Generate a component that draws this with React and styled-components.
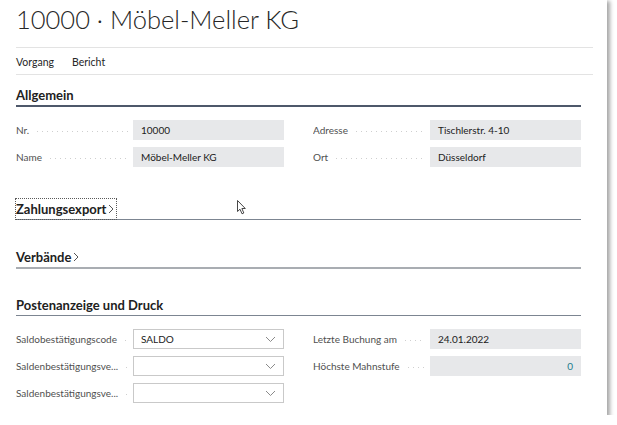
import React from "react";
import styled, { createGlobalStyle } from "styled-components";

const Global = createGlobalStyle`
  html, body { margin: 0; padding: 0; background: #ffffff; }
  body { font-family: "Lato", "Open Sans", sans-serif; color: #212121; }
  * { box-sizing: border-box; }
`;

const Page = styled.div`
  position: relative;
  width: 607px;
  height: 415px;
  background: #ffffff;
  box-shadow: 2px 2px 4px 1px rgba(0, 0, 0, 0.35);
  padding-left: 16px;
  overflow: hidden;
`;

const TitleBar = styled.div`
  width: 577px;
  height: 48px;
  border-bottom: 1px solid #e3e3e3;
  display: flex;
  align-items: center;
`;

const Title = styled.h1`
  margin: 0;
  font-weight: 300;
  font-size: 25.5px;
  line-height: 1;
  color: #262626;
  margin-top: -7px;
`;

const ActionBar = styled.div`
  width: 577px;
  height: 27px;
  border-bottom: 1px solid #e3e3e3;
  display: flex;
  align-items: center;
  gap: 18px;
  padding-top: 1px;
`;

const Action = styled.span`
  font-size: 10.5px;
  color: #262626;
`;

const Content = styled.div`
  width: 565px;
`;

const SectionHead = styled.div`
  margin-top: ${(p) => p.$top}px;
  height: ${(p) => 20 + p.$line}px;
  border-bottom: ${(p) => p.$line}px solid ${(p) => p.$color};
  display: flex;
  align-items: flex-start;
`;

const HeadText = styled.span`
  display: inline-flex;
  align-items: center;
  gap: 2px;
  height: 20px;
  font-size: 13px;
  font-weight: 700;
  color: #212121;
  outline: ${(p) => (p.$focus ? "1px dotted #5a5a5a" : "none")};
  outline-offset: 0;
  padding-right: ${(p) => (p.$focus ? "2px" : "0")};
`;

const Grid = styled.div`
  margin-top: ${(p) => p.$top}px;
  display: grid;
  grid-template-columns: 268px 268px;
  column-gap: 29px;
  align-items: start;
`;

const Column = styled.div`
  display: flex;
  flex-direction: column;
  gap: 7px;
`;

const Field = styled.div`
  display: flex;
  align-items: center;
  height: 20px;
`;

const Label = styled.div`
  width: 117px;
  flex: none;
  display: flex;
  align-items: center;
  font-size: 10px;
  color: #505050;
  white-space: nowrap;
  overflow: hidden;
`;

const Leader = styled.span`
  flex: 1;
  height: 1px;
  margin: 3px 5px 0 6px;
  background-image: radial-gradient(circle, #cfcfcf 0.6px, transparent 0.8px);
  background-size: 5px 1px;
  background-repeat: repeat-x;
`;

const Value = styled.div`
  flex: 1;
  height: 20px;
  background: ${(p) => (p.$select ? "#ffffff" : "#e7e8ea")};
  border: ${(p) => (p.$select ? "1px solid #c9c9c9" : "none")};
  display: flex;
  align-items: center;
  justify-content: ${(p) => (p.$right ? "flex-end" : "space-between")};
  padding: 0 ${(p) => (p.$select ? "7px" : "8px")};
  font-size: 10px;
  color: ${(p) => (p.$number ? "#1f7d8c" : "#212121")};
`;

const Cursor = styled.svg`
  position: absolute;
  left: 237px;
  top: 200px;
`;

const Chevron = () => (
  <svg width="6" height="10" viewBox="0 0 6 10">
    <path d="M1 1 L5 5 L1 9" fill="none" stroke="#555" strokeWidth="1" />
  </svg>
);

const Down = () => (
  <svg width="11" height="7" viewBox="0 0 11 7">
    <path d="M1 1 L5.5 5.5 L10 1" fill="none" stroke="#8a8a8a" strokeWidth="1" />
  </svg>
);

const Row = ({ label, value, select, right, number }) => (
  <Field>
    <Label>
      {label}
      <Leader />
    </Label>
    <Value $select={select} $right={right} $number={number}>
      <span>{value}</span>
      {select && <Down />}
    </Value>
  </Field>
);

export default function App() {
  return (
    <>
      <Global />
      <Page>
        <TitleBar>
          <Title>10000 · Möbel-Meller KG</Title>
        </TitleBar>
        <ActionBar>
          <Action>Vorgang</Action>
          <Action>Bericht</Action>
        </ActionBar>
        <Content>
          <SectionHead $top={10} $line={2} $color="#4e586a">
            <HeadText>Allgemein</HeadText>
          </SectionHead>
          <Grid $top={13}>
            <Column>
              <Row label="Nr." value="10000" />
              <Row label="Name" value="Möbel-Meller KG" />
            </Column>
            <Column>
              <Row label="Adresse" value="Tischlerstr. 4-10" />
              <Row label="Ort" value="Düsseldorf" />
            </Column>
          </Grid>

          <SectionHead $top={32} $line={1} $color="#7c8591">
            <HeadText $focus>
              Zahlungsexport
              <Chevron />
            </HeadText>
          </SectionHead>

          <SectionHead $top={27} $line={2} $color="#a9adb2">
            <HeadText>
              Verbände
              <Chevron />
            </HeadText>
          </SectionHead>

          <SectionHead $top={26} $line={1} $color="#7c8591">
            <HeadText>Postenanzeige und Druck</HeadText>
          </SectionHead>
          <Grid $top={13}>
            <Column>
              <Row label="Saldobestätigungscode" value="SALDO" select />
              <Row label="Saldenbestätigungsve..." value="" select />
              <Row label="Saldenbestätigungsve..." value="" select />
            </Column>
            <Column>
              <Row label="Letzte Buchung am" value="24.01.2022" />
              <Row label="Höchste Mahnstufe" value="0" right number />
            </Column>
          </Grid>
        </Content>
        <Cursor width="10" height="15" viewBox="0 0 10 15">
          <path
            d="M0.5 0.5 L0.5 11.5 L3 9.2 L5 13.8 L6.8 13 L4.9 8.5 L8.3 8.5 Z"
            fill="#ffffff"
            stroke="#333"
            strokeWidth="0.9"
            strokeLinejoin="round"
          />
        </Cursor>
      </Page>
    </>
  );
}
